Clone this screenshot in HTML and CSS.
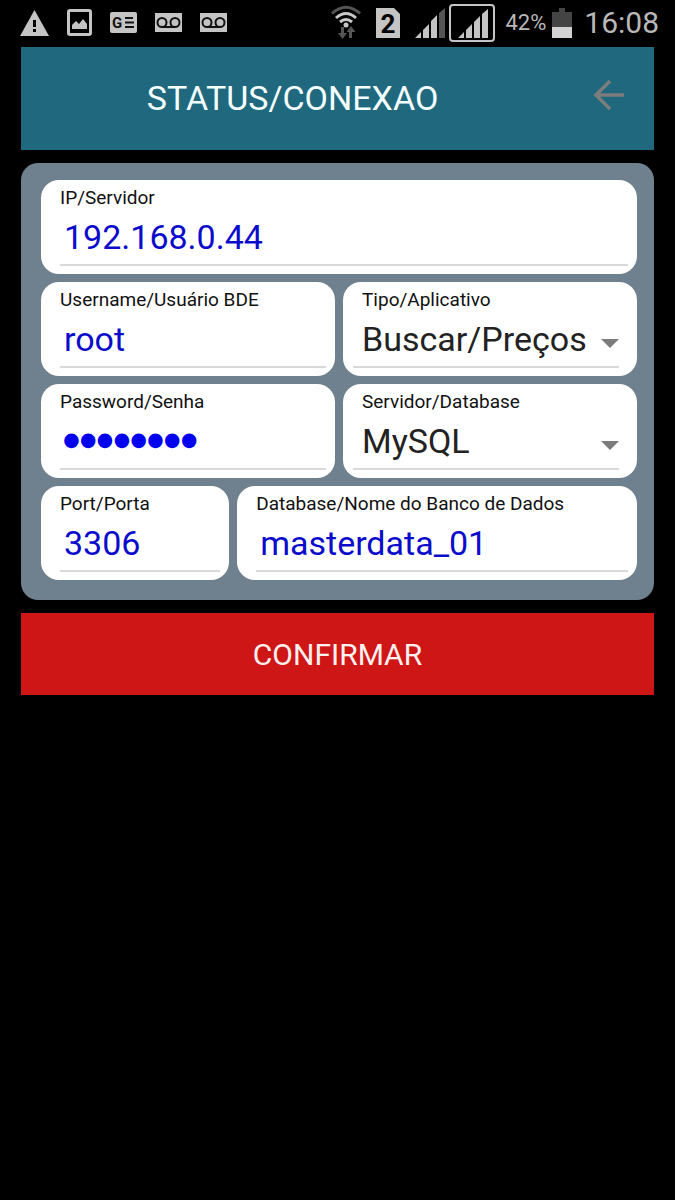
FILE: index.html
```
<!DOCTYPE html>
<html lang="pt-BR">
  <head>
    <meta charset="UTF-8" />
    <meta name="viewport" content="width=device-width, initial-scale=1.0" />
    <title>Status/Conexao</title>
    <link rel="stylesheet" href="styles.css">
  </head>
  <body>
    <div class="status-bar">
      <div class="notifications">
        <svg width="29" height="26" viewBox="0 0 29 26">
          <path d="M14.500 0L29 26H0Z" fill="#c4c4c4" />
          <path d="M13 10h3v7h-3zM13 19h3v3h-3z" fill="#000" />
        </svg>
        <svg width="25" height="27" viewBox="0 0 25 27">
          <rect x="1.500" y="1.500" width="22" height="24" rx="1.500" fill="none" stroke="#c4c4c4" stroke-width="3" />
          <path d="M5 20v-4l4-4 3 3 4-5 4 5v5z" fill="#c4c4c4" />
        </svg>
        <svg width="27" height="21" viewBox="0 0 27 21">
          <rect width="27" height="21" rx="2" fill="#c4c4c4" />
          <text x="2" y="16" class="news-letter">G</text>
          <path d="M15 6h8M15 10.500h9M15 15h9" stroke="#111" stroke-width="2" />
        </svg>
        <svg width="27" height="19" viewBox="0 0 27 19">
          <rect width="27" height="19" fill="#c4c4c4" />
          <g fill="none" stroke="#111" stroke-width="2">
            <circle cx="7" cy="9.500" r="4.500" />
            <circle cx="20" cy="9.500" r="4.500" />
            <path d="M7 14h13" />
          </g>
        </svg>
        <svg width="27" height="19" viewBox="0 0 27 19">
          <rect width="27" height="19" fill="#c4c4c4" />
          <g fill="none" stroke="#111" stroke-width="2">
            <circle cx="7" cy="9.500" r="4.500" />
            <circle cx="20" cy="9.500" r="4.500" />
            <path d="M7 14h13" />
          </g>
        </svg>
      </div>

      <div class="system">
        <svg class="wifi" width="30" height="34" viewBox="0 0 30 34">
          <path d="M1 7.500Q15-5 29 7.500" fill="none" stroke="#555" stroke-width="3" />
          <path d="M5 12Q15 3 25 12M9 16Q15 11 21 16" fill="none" stroke="#c8c8c8" stroke-width="3" />
          <circle cx="15" cy="19" r="2.500" fill="#c8c8c8" />
          <path d="M10 21h3v6h3l-4.500 6L7 27h3zM18 32v-6h-2.500l4.500-6 4.500 6H21v6z" fill="#555" />
        </svg>
        <svg class="sim" width="24" height="30" viewBox="0 0 24 30">
          <path d="M0 0h18l6 6v24H0z" fill="#c4c4c4" />
          <text x="12" y="25" class="sim-number">2</text>
        </svg>
        <svg class="signal" width="30" height="30" viewBox="0 0 30 30">
          <path d="M0 30l6-6v6zM8 30v-8l6-6v14zM16 30V13l6-6v23z" fill="#c4c4c4" />
          <path d="M24 30V5l6-5v30z" fill="#555" />
        </svg>
        <svg class="signal-box" width="46" height="38" viewBox="0 0 46 38">
          <rect x="1" y="1" width="44" height="36" rx="3" fill="none" stroke="#c4c4c4" stroke-width="2" />
          <path d="M9 34l6-6v6zM17 34v-8l6-6v14zM25 34V18l6-6v22zM33 34V10l6-5v29z" fill="#c4c4c4" />
        </svg>
        <span class="percent">42%</span>
        <svg class="battery" width="20" height="30" viewBox="0 0 20 30">
          <path d="M0 4h7V0h6v4h7v15H0z" fill="#444" />
          <path d="M0 19h20v11H0z" fill="#d2d2d2" />
        </svg>
        <span class="clock">16:08</span>
      </div>
    </div>

    <main class="screen">
      <header class="title-bar">
        <h1>STATUS/CONEXAO</h1>
        <button class="back-button" type="button" aria-label="Voltar">
          <svg width="30" height="30" viewBox="0 0 30 30">
            <path d="M30 15H3M16 1L2 15l14 14" fill="none" stroke="#7c7c7c" stroke-width="3.500" />
          </svg>
        </button>
      </header>

      <form class="connection" id="connection">
        <div class="row">
          <div class="field">
            <label for="ip">IP/Servidor</label>
            <input id="ip" type="text" value="192.168.0.44" />
          </div>
        </div>

        <div class="row row-half">
          <div class="field">
            <label for="username">Username/Usuário BDE</label>
            <input id="username" type="text" value="root" />
          </div>
          <div class="field field-select">
            <label for="app-type">Tipo/Aplicativo</label>
            <div class="select-box">
              <select id="app-type">
                <option>Buscar/Preços</option>
              </select>
            </div>
          </div>
        </div>

        <div class="row row-half">
          <div class="field">
            <label for="password">Password/Senha</label>
            <input id="password" class="password" type="password" value="password" />
          </div>
          <div class="field field-select">
            <label for="server">Servidor/Database</label>
            <div class="select-box">
              <select id="server">
                <option>MySQL</option>
              </select>
            </div>
          </div>
        </div>

        <div class="row row-database">
          <div class="field">
            <label for="port">Port/Porta</label>
            <input id="port" type="text" value="3306" />
          </div>
          <div class="field">
            <label for="database">Database/Nome do Banco de Dados</label>
            <input id="database" type="text" value="masterdata_01" />
          </div>
        </div>
      </form>

      <button class="confirm-button" type="submit" form="connection">CONFIRMAR</button>
    </main>
  </body>
</html>
```
FILE: styles.css
```
* {
  box-sizing: border-box;
}

body {
  margin: 0;
  background-color: #000;
  font-family: Roboto, "Liberation Sans", sans-serif;
}

svg {
  display: block;
  flex-shrink: 0;
  overflow: visible;
}

/* Status bar */
.status-bar {
  display: flex;
  justify-content: space-between;
  height: 47px;
  padding: 0 16px 2px 20px;
  color: #b8b8b8;
}

.notifications,
.system {
  display: flex;
  align-items: center;
}

.notifications {
  gap: 18px;
}

.wifi,
.sim {
  margin-right: 15px;
}

.signal {
  margin-right: 4px;
}

.signal-box {
  margin-right: 10px;
}

.percent {
  margin-right: 6px;
  font-size: 22px;
}

.battery {
  margin-right: 12px;
}

.clock {
  font-size: 30px;
}

.news-letter {
  font-size: 15px;
  font-weight: bold;
  fill: #111;
}

.sim-number {
  font-size: 26px;
  font-weight: bold;
  text-anchor: middle;
  fill: #000;
}

/* Screen */
.screen {
  display: flex;
  flex-direction: column;
  gap: 13px;
  padding: 0 21px;
}

.title-bar {
  display: flex;
  align-items: stretch;
  height: 103px;
  background-color: #20687d;
}

.title-bar h1 {
  flex: 1;
  margin: 0;
  font-size: 34px;
  font-weight: 400;
  line-height: 103px;
  text-align: center;
  color: #f4ffff;
}

.back-button {
  display: flex;
  align-items: center;
  justify-content: center;
  width: 90px;
  padding: 0 0 7px;
  border: none;
  background: none;
  cursor: pointer;
}

.connection {
  display: flex;
  flex-direction: column;
  gap: 8px;
  padding: 17px 17px 20px 20px;
  border-radius: 17px;
  background-color: #6f808e;
}

.row {
  display: grid;
  gap: 8px;
}

.row-half {
  grid-template-columns: 1fr 1fr;
}

.row-database {
  grid-template-columns: 8fr 17fr;
}

.field {
  min-width: 0;
  padding: 7px 9px 8px 19px;
  border-radius: 18px;
  background-color: #fff;
}

.field label {
  display: block;
  font-size: 19px;
  line-height: 22px;
  white-space: nowrap;
  color: #111;
}

.field input,
.field select {
  display: block;
  width: 100%;
  height: 57px;
  border: none;
  border-bottom: 2px solid #d9d9d9;
  border-radius: 0;
  outline: none;
  background: none;
  font-family: inherit;
  font-size: 34px;
}

.field input {
  padding: 0 4px;
  color: #0b0bcc;
}

/* Large, heavy dots */
.field .password {
  padding: 0 3px;
  font-family: "Liberation Serif", serif;
  font-size: 48px;
  color: #0000ee;
  -webkit-text-stroke: 3px #0000ee;
}

.field-select {
  padding: 7px 18px 8px 10px;
}

.field-select label {
  padding-left: 9px;
}

.select-box {
  position: relative;
}

.select-box::after {
  content: "";
  position: absolute;
  top: 28px;
  right: 0;
  border: 9px solid transparent;
  border-top-color: #7b7b7b;
  border-bottom: none;
  pointer-events: none;
}

.field select {
  appearance: none;
  padding: 0 24px 0 9px;
  color: #222;
}

.confirm-button {
  height: 82px;
  border: none;
  background-color: #cf1616;
  font-family: inherit;
  font-size: 30px;
  color: #fff0f0;
  cursor: pointer;
}
```
